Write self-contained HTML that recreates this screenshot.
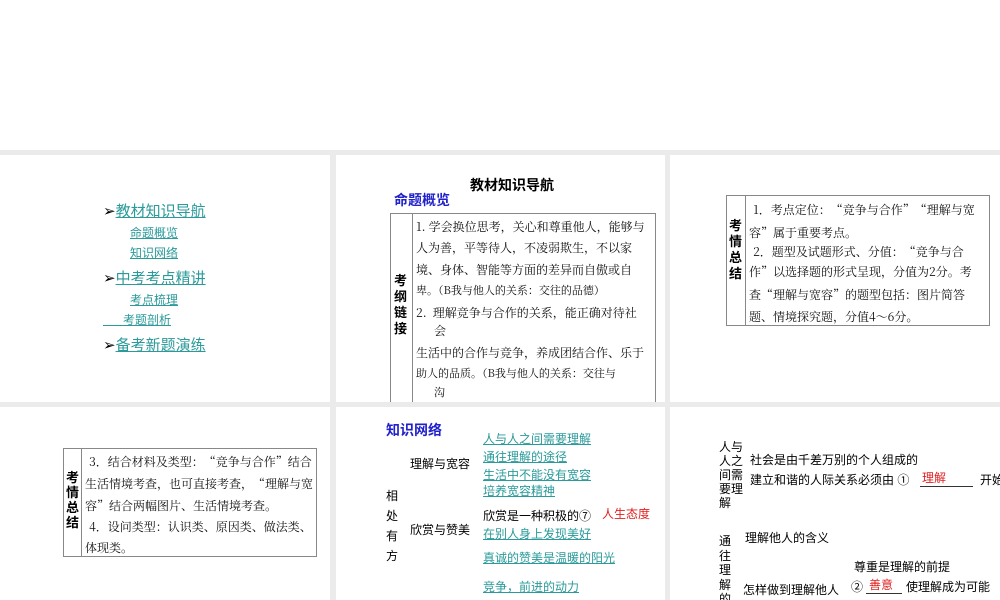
<!DOCTYPE html>
<html><head><meta charset="utf-8"><style>
body{margin:0;width:1000px;height:600px;overflow:hidden;background:#fff;font-family:"Liberation Sans","Noto Sans CJK SC",sans-serif;position:relative}
.bg{position:absolute;left:0;top:150px;width:1000px;height:450px;background:#ebebeb}
.p{position:absolute;background:#fff;overflow:hidden}
.t{position:absolute;white-space:nowrap;line-height:1}
.lk{color:#2a9a9a;text-decoration:underline}
.s{font-family:"Noto Serif CJK SC",serif;font-size:12px;color:#111}
.bl{color:#2222cc;font-weight:bold;font-size:14px}
.tb{position:absolute;border:1px solid #888}
.vl{position:absolute;border-left:1px solid #888}
.red{color:#e02020}
</style></head><body>
<div class="bg"></div>
<!-- row1 -->
<div class="p" style="left:0;top:155px;width:330px;height:247px">
<div class="t" style="left:103px;top:49px;font-size:15px">➢<span class="lk">教材知识导航</span></div>
<div class="t lk" style="left:130px;top:72px;font-size:12px">命题概览</div>
<div class="t lk" style="left:130px;top:92px;font-size:12px">知识网络</div>
<div class="t" style="left:103px;top:116px;font-size:15px">➢<span class="lk">中考考点精讲</span></div>
<div class="t lk" style="left:130px;top:139px;font-size:12px">考点梳理</div>
<div class="t lk" style="left:103px;top:159px;font-size:12px">&nbsp;&nbsp;&nbsp;&nbsp;&nbsp;&nbsp;考题剖析</div>
<div class="t" style="left:103px;top:183px;font-size:15px">➢<span class="lk">备考新题演练</span></div>
</div>
<div class="p" style="left:336px;top:155px;width:329px;height:247px">
<div class="t" style="left:134px;top:23px;font-size:14px;font-weight:bold">教材知识导航</div>
<div class="t bl" style="left:58px;top:38px">命题概览</div>
<div class="tb" style="left:54px;top:58px;width:264px;height:200px"></div>
<div class="vl" style="left:76px;top:58px;height:200px"></div>
<div class="t" style="left:58px;top:118px;font-size:13px;font-weight:bold;line-height:16px;white-space:normal;width:14px">考纲链接</div>
<div class="t s" style="left:80px;top:66px">1. 学会换位思考，关心和尊重他人，能够与</div>
<div class="t s" style="left:80px;top:87px">人为善，平等待人，不凌弱欺生，不以家</div>
<div class="t s" style="left:80px;top:109px">境、身体、智能等方面的差异而自傲或自</div>
<div class="t s" style="left:80px;top:130px;font-size:11px">卑。（B我与他人的关系：交往的品德）</div>
<div class="t s" style="left:80px;top:152px">2.&nbsp;&nbsp;理解竞争与合作的关系，能正确对待社</div>
<div class="t s" style="left:98px;top:170px">会</div>
<div class="t s" style="left:80px;top:192px">生活中的合作与竞争，养成团结合作、乐于</div>
<div class="t s" style="left:80px;top:213px;font-size:11px">助人的品质。（B我与他人的关系：交往与</div>
<div class="t s" style="left:98px;top:232px;font-size:11px">沟</div>
</div>
<div class="p" style="left:670px;top:155px;width:330px;height:247px">
<div class="tb" style="left:56px;top:40px;width:262px;height:129px"></div>
<div class="vl" style="left:75px;top:40px;height:130px"></div>
<div class="t" style="left:59px;top:63px;font-size:13px;font-weight:bold;line-height:16px;white-space:normal;width:14px">考情总结</div>
<div class="t s" style="left:80px;top:49px">&nbsp;1．考点定位：“竞争与合作”“理解与宽</div>
<div class="t s" style="left:79px;top:72px">容”属于重要考点。</div>
<div class="t s" style="left:80px;top:91px">&nbsp;2．题型及试题形式、分值：“竞争与合</div>
<div class="t s" style="left:79px;top:111px">作”以选择题的形式呈现，分值为2分。考</div>
<div class="t s" style="left:79px;top:134px">查“理解与宽容”的题型包括：图片简答</div>
<div class="t s" style="left:79px;top:156px">题、情境探究题，分值4～6分。</div>
</div>
<!-- row2 -->
<div class="p" style="left:0;top:407px;width:330px;height:193px">
<div class="tb" style="left:63px;top:41px;width:252px;height:107px"></div>
<div class="vl" style="left:81px;top:41px;height:108px"></div>
<div class="t" style="left:66px;top:63px;font-size:13px;font-weight:bold;line-height:15px;white-space:normal;width:14px">考情总结</div>
<div class="t s" style="left:86px;top:49px">&nbsp;3．结合材料及类型：“竞争与合作”结合</div>
<div class="t s" style="left:85px;top:71px">生活情境考查，也可直接考查，“理解与宽</div>
<div class="t s" style="left:85px;top:93px">容”结合两幅图片、生活情境考查。</div>
<div class="t s" style="left:86px;top:114px">&nbsp;4．设问类型：认识类、原因类、做法类、</div>
<div class="t s" style="left:85px;top:135px">体现类。</div>
</div>
<div class="p" style="left:336px;top:407px;width:329px;height:193px">
<div class="t bl" style="left:50px;top:16px">知识网络</div>
<div class="t" style="left:74px;top:51px;font-size:12px">理解与宽容</div>
<div class="t" style="left:50px;top:79px;font-size:12px;line-height:20px;white-space:normal;width:13px">相处有方</div>
<div class="t" style="left:74px;top:117px;font-size:12px">欣赏与赞美</div>
<div class="t lk" style="left:147px;top:26px;font-size:12px">人与人之间需要理解</div>
<div class="t lk" style="left:147px;top:44px;font-size:12px">通往理解的途径</div>
<div class="t lk" style="left:147px;top:62px;font-size:12px">生活中不能没有宽容</div>
<div class="t lk" style="left:147px;top:78px;font-size:12px">培养宽容精神</div>
<div class="t" style="left:147px;top:103px;font-size:12px">欣赏是一种积极的⑦</div>
<div class="t red" style="left:266px;top:101px;font-size:12px">人生态度</div>
<div class="t lk" style="left:147px;top:121px;font-size:12px">在别人身上发现美好</div>
<div class="t lk" style="left:147px;top:145px;font-size:12px">真诚的赞美是温暖的阳光</div>
<div class="t lk" style="left:147px;top:174px;font-size:12px">竞争，前进的动力</div>
</div>
<div class="p" style="left:670px;top:407px;width:330px;height:193px">
<div class="t" style="left:49px;top:33px;font-size:12px;line-height:14px;white-space:normal;width:26px">人与人之间需要理解</div>
<div class="t" style="left:80px;top:47px;font-size:12px">社会是由千差万别的个人组成的</div>
<div class="t" style="left:80px;top:67px;font-size:12px">建立和谐的人际关系必须由 ①</div>
<div class="t red" style="left:252px;top:65px;font-size:12px">理解</div>
<div style="position:absolute;left:250px;top:79px;width:53px;border-top:1px solid #333"></div>
<div class="t" style="left:310px;top:67px;font-size:12px">开始</div>
<div class="t" style="left:49px;top:127px;font-size:12px;line-height:14.5px;white-space:normal;width:13px">通往理解的</div>
<div class="t" style="left:75px;top:125px;font-size:12px">理解他人的含义</div>
<div class="t" style="left:184px;top:154px;font-size:12px">尊重是理解的前提</div>
<div class="t" style="left:73px;top:177px;font-size:12px">怎样做到理解他人</div>
<div class="t" style="left:181px;top:174px;font-size:12px">②</div>
<div class="t red" style="left:199px;top:172px;font-size:12px">善意</div>
<div style="position:absolute;left:196px;top:186px;width:36px;border-top:1px solid #333"></div>
<div class="t" style="left:236px;top:174px;font-size:12px">使理解成为可能</div>
</div>
</body></html>
